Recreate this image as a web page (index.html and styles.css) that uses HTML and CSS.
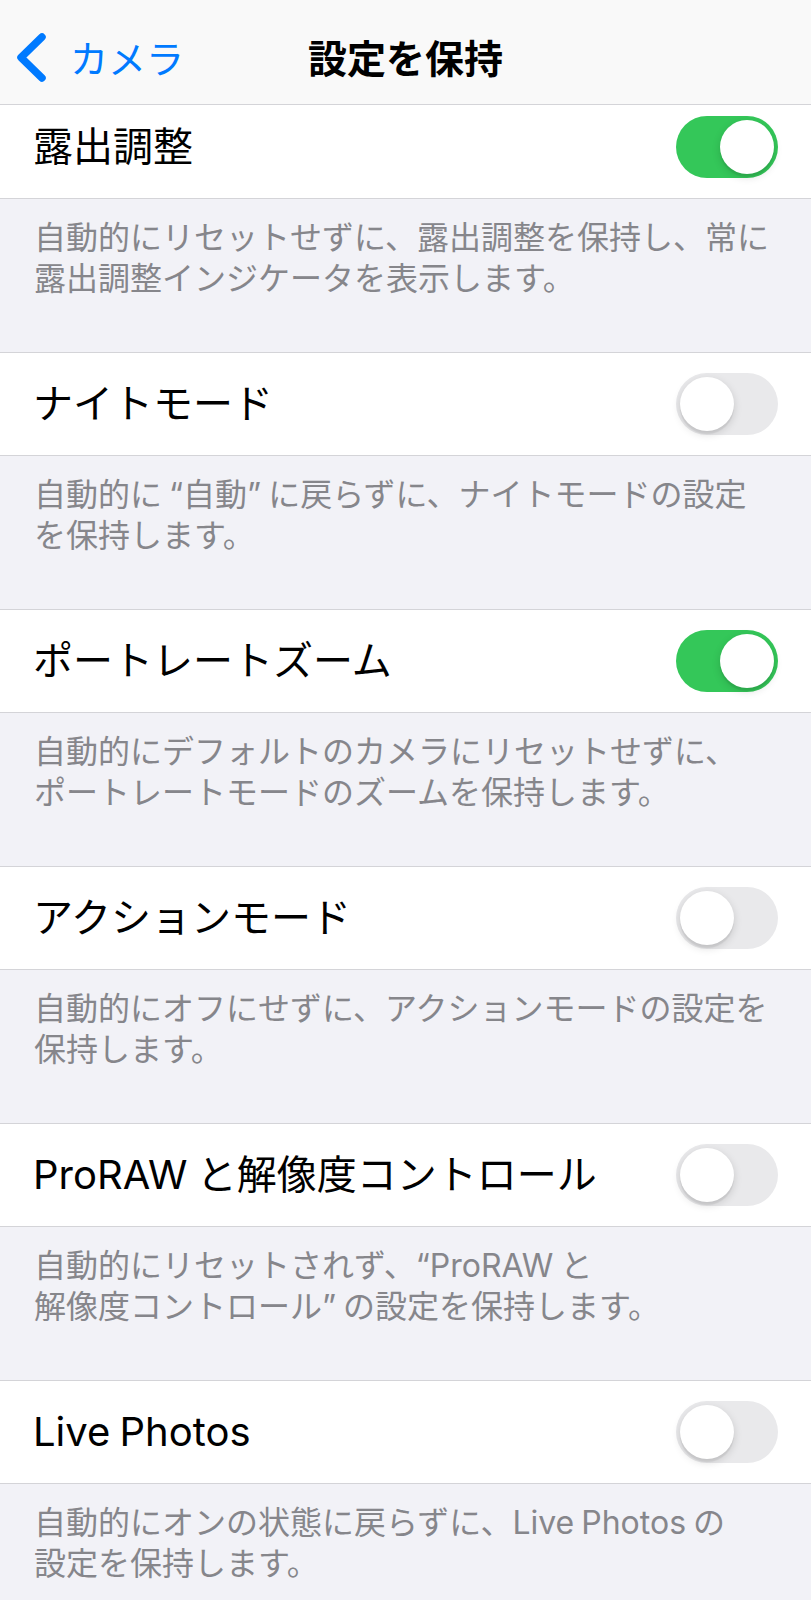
FILE: index.html
```html
<!DOCTYPE html>
<html lang="ja">
<head>
<meta charset="utf-8">
<title>設定を保持</title>
<link rel="stylesheet" href="styles.css">
</head>
<body>
<header class="nav">
  <a class="back">
    <svg class="chev" width="32" height="50" viewBox="0 0 32 50"><polyline points="26,4 5,24.5 26,45" fill="none" stroke="#007aff" stroke-width="7.5" stroke-linecap="round" stroke-linejoin="round"/></svg>
    <span class="back-text">カメラ</span>
  </a>
  <h1 class="title">設定を保持</h1>
  <span class="spacer"></span>
</header>
<main class="list">
  <section class="group first">
    <div class="cell"><span class="label">露出調整</span><span class="switch on"><span class="knob"></span></span></div>
    <p class="note">自動的にリセットせずに、露出調整を保持し、常に<br>露出調整インジケータを表示します。</p>
  </section>
  <section class="group">
    <div class="cell"><span class="label">ナイトモード</span><span class="switch"><span class="knob"></span></span></div>
    <p class="note">自動的に “自動” に戻らずに、ナイトモードの設定<br>を保持します。</p>
  </section>
  <section class="group">
    <div class="cell"><span class="label">ポートレートズーム</span><span class="switch on"><span class="knob"></span></span></div>
    <p class="note">自動的にデフォルトのカメラにリセットせずに、<br>ポートレートモードのズームを保持します。</p>
  </section>
  <section class="group">
    <div class="cell"><span class="label">アクションモード</span><span class="switch"><span class="knob"></span></span></div>
    <p class="note">自動的にオフにせずに、アクションモードの設定を<br>保持します。</p>
  </section>
  <section class="group">
    <div class="cell"><span class="label">ProRAW と解像度コントロール</span><span class="switch"><span class="knob"></span></span></div>
    <p class="note">自動的にリセットされず、“ProRAW と<br>解像度コントロール” の設定を保持します。</p>
  </section>
  <section class="group">
    <div class="cell"><span class="label">Live Photos</span><span class="switch"><span class="knob"></span></span></div>
    <p class="note">自動的にオンの状態に戻らずに、Live Photos の<br>設定を保持します。</p>
  </section>
</main>
</body>
</html>
```
FILE: styles.css
```css
* { box-sizing: border-box; }
html, body {
  margin: 0;
  padding: 0;
  background: #f2f2f7;
}
body {
  width: 811px;
  font-family: "Inter", "Noto Sans CJK JP", sans-serif;
  color: #000;
  overflow: hidden;
}
.nav {
  position: relative;
  z-index: 2;
  height: 105px;
  padding-top: 14px;
  background: #f9f9f9;
  border-bottom: 1px solid #d4d4d8;
  display: grid;
  grid-template-columns: 1fr auto 1fr;
  align-items: center;
}
.back {
  display: flex;
  align-items: center;
  padding-left: 16px;
  color: #007aff;
}
.chev { display: block; margin-top: -2px; }
.back-text {
  margin-left: 22px;
  font-size: 38px;
  line-height: 46px;
  color: #007aff;
}
.title {
  margin: 0;
  font-size: 39px;
  line-height: 46px;
  font-weight: 700;
  text-align: center;
}
.list { margin-top: -10px; }
.group { display: flex; flex-direction: column; }
.cell {
  height: 104px;
  background: #fff;
  border-top: 1px solid #d4d4d8;
  border-bottom: 1px solid #d4d4d8;
  display: flex;
  align-items: center;
  justify-content: space-between;
  padding: 0 33px 0 33px;
}
.label {
  font-size: 40px;
  line-height: 48px;
  font-weight: 400;
  word-spacing: -2px;
}
.switch {
  width: 102px;
  height: 62px;
  border-radius: 31px;
  background: #e9e9eb;
  padding: 4px;
  display: flex;
  justify-content: flex-start;
  flex: none;
}
.switch.on {
  background: #34c759;
  justify-content: flex-end;
}
.knob {
  width: 54px;
  height: 54px;
  border-radius: 50%;
  background: #fff;
  box-shadow: 0 3px 8px rgba(0,0,0,0.15), 0 3px 1px rgba(0,0,0,0.06);
}
.note {
  margin: 0;
  height: 153px;
  padding: 18px 16px 0 34px;
  font-size: 32px;
  line-height: 41px;
  color: #86868b;
  white-space: nowrap;
  word-spacing: -2px;
}
```
